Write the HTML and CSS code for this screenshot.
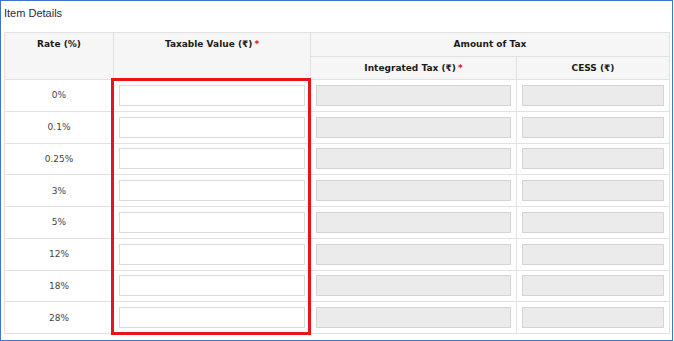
FILE: index.html
```html
<!DOCTYPE html>
<html lang="en">

<head>
	<meta charset="UTF-8">
	<meta name="viewport" content="width=device-width, initial-scale=1.0">
	<title>Item Details</title>
	<link rel="stylesheet" href="styles.css">
</head>

<body>
	<div class="panel">
		<h2 class="panel-title">Item Details</h2>
		<table class="items">
			<colgroup>
				<col class="c-rate">
				<col class="c-taxable">
				<col class="c-igst">
				<col class="c-cess">
			</colgroup>
			<thead>
				<tr class="h1">
					<th rowspan="2">Rate (%)</th>
					<th rowspan="2">Taxable Value (₹)<span class="req">*</span></th>
					<th colspan="2">Amount of Tax</th>
				</tr>
				<tr class="h2">
					<th>Integrated Tax (₹)<span class="req">*</span></th>
					<th>CESS (₹)</th>
				</tr>
			</thead>
			<tbody>
				<tr><td class="rate">0%</td><td><input type="text"></td><td><input type="text" disabled></td><td><input type="text" disabled></td></tr>
				<tr><td class="rate">0.1%</td><td><input type="text"></td><td><input type="text" disabled></td><td><input type="text" disabled></td></tr>
				<tr><td class="rate">0.25%</td><td><input type="text"></td><td><input type="text" disabled></td><td><input type="text" disabled></td></tr>
				<tr><td class="rate">3%</td><td><input type="text"></td><td><input type="text" disabled></td><td><input type="text" disabled></td></tr>
				<tr><td class="rate">5%</td><td><input type="text"></td><td><input type="text" disabled></td><td><input type="text" disabled></td></tr>
				<tr><td class="rate">12%</td><td><input type="text"></td><td><input type="text" disabled></td><td><input type="text" disabled></td></tr>
				<tr><td class="rate">18%</td><td><input type="text"></td><td><input type="text" disabled></td><td><input type="text" disabled></td></tr>
				<tr><td class="rate">28%</td><td><input type="text"></td><td><input type="text" disabled></td><td><input type="text" disabled></td></tr>
			</tbody>
		</table>
		<!-- highlight round the taxable value column -->
		<div class="highlight"></div>
	</div>
</body>

</html>
```

FILE: styles.css
```css
*,
*::before,
*::after {
	box-sizing: border-box;
}

html, body {
	margin: 0;
	background: #fff;
}

.panel {
	position: relative;
	width: 673px;
	height: 341px;
	border: 1px solid #4472c4;
	padding: 0 0 0 3px;
}

.panel-title {
	margin: 0;
	padding: 6px 0 0 0;
	height: 31px;
	font-family: "Liberation Sans", Arial, sans-serif;
	font-size: 11px;
	font-weight: normal;
	color: #1a2a52;
}

table.items {
	width: 665px;
	table-layout: fixed;
	border-collapse: collapse;
	font-family: "DejaVu Sans", Verdana, sans-serif;
}

.c-rate { width: 109px; }
.c-taxable { width: 197px; }
.c-igst { width: 206px; }
.c-cess { width: 153px; }

th,
td {
	border: 1px solid #e2e2e2;
	padding: 0 5px;
}

th {
	background: #f6f6f6;
	font-size: 9px;
	font-weight: bold;
	color: #1a1a1a;
	text-align: center;
	vertical-align: top;
	padding-top: 6px;
}

tr.h1 { height: 24px; }
tr.h2 { height: 23px; }

.req {
	color: #e0141e;
	margin-left: 2px;
}

tbody tr { height: 31.75px; }

td.rate {
	text-align: center;
	font-size: 9px;
	color: #444;
}

td input {
	display: block;
	width: 100%;
	height: 21px;
	margin: 0;
	border: 1px solid #dadada;
	background: #fff;
	font-size: 10px;
}

td input:disabled {
	background: #ebebeb;
	border-color: #d4d4d4;
}

.highlight {
	position: absolute;
	left: 110px;
	top: 77px;
	width: 200px;
	height: 257px;
	border: 3px solid #e8141c;
}
```
